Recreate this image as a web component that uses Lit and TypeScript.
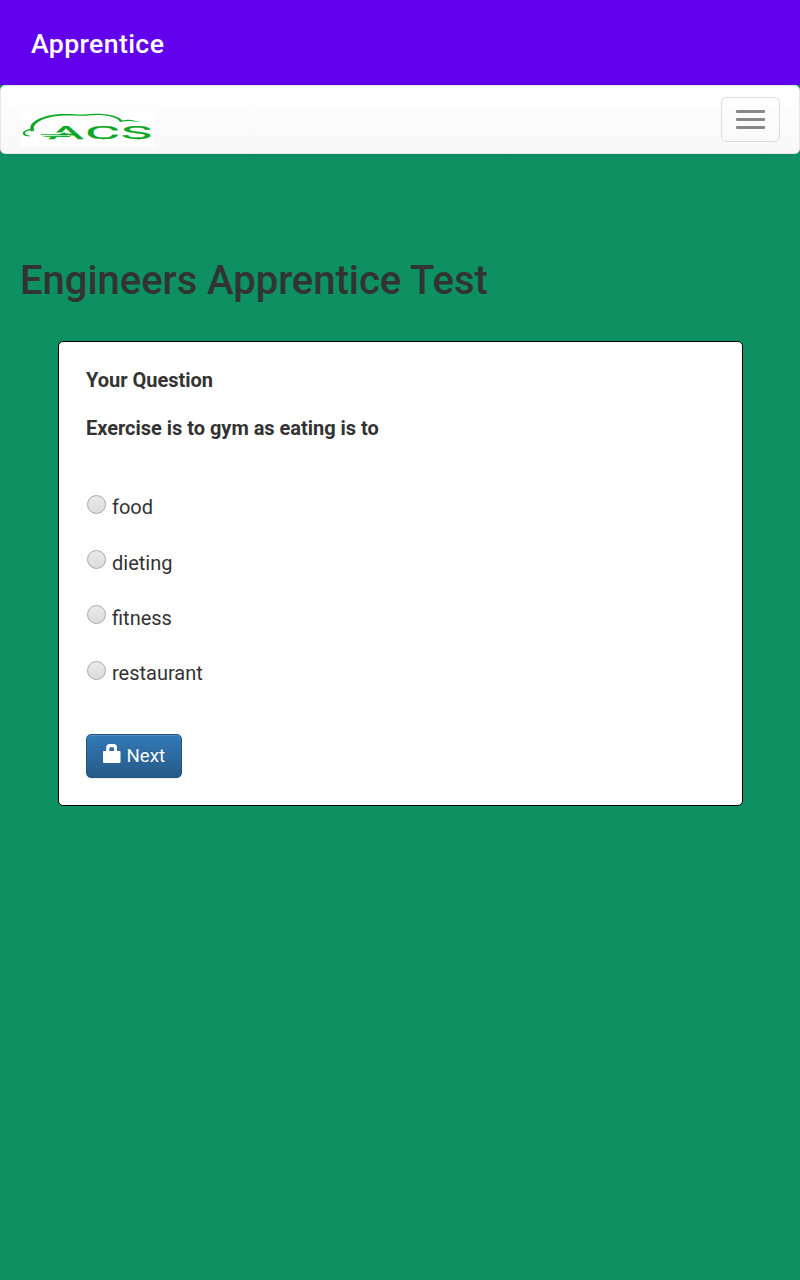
import { LitElement, html, css } from "lit";
import { customElement, state } from "lit/decorators.js";

@customElement("acs-logo")
class AcsLogo extends LitElement {
  static styles = css`
    :host { display: block; width: 133px; height: 41px; }
    svg { display: block; background: #fefefe; }
    text { font: 400 19px Roboto, "Liberation Sans", sans-serif; stroke: #0aa822; stroke-width: .25px; }
  `;
  render() {
    return html`<svg width="133" height="41" viewBox="0 0 133 41" fill="#0aa822" aria-label="ACS">
      <path d="M10.500 25.500C5 17 20 9.500 37 8.200C47 7.500 56 8.800 64 8.500C80 6.500 98 9.500 101 14.500C108 12.500 115 14.500 119 16.500C111 14.500 106 14.500 99 16C96 10 80 8 65 9.700C54 9.700 47 9 37 9.900C20 11.500 10 18.500 13.500 24.500Z"/>
      <path d="M10 23C4 23.500 1 26 2 28C3 30 6 30.500 10 30C6 29.300 4 28.500 4 27C4 25 8 24.500 13 24.500Z"/>
      <g>
        <text x="27" y="33" textLength="36" lengthAdjust="spacingAndGlyphs">A</text>
        <text x="64" y="33" textLength="35" lengthAdjust="spacingAndGlyphs">C</text>
        <text x="100" y="33" textLength="31" lengthAdjust="spacingAndGlyphs">S</text>
      </g>
      <path fill="#fefefe" d="M30 26.500H44L50 31H30Z"/>
      <path d="M20 28.200L38 28.200L43 26.500L49 28.500L46 29.400L20 29ZM21 30.300L48 30L50 31L25 31Z"/>
    </svg>`;
  }
}

@customElement("app-root")
class AppRoot extends LitElement {
  static styles = css`
    :host { display: block; min-height: 1280px; background: #0d9163; color: #333; font: 20px/28px Roboto, sans-serif; }
    * { box-sizing: border-box; }
    .appbar { height: 85px; padding: 2px 31px 0; display: flex; align-items: center; background: #6200ee; color: #fff; font-size: 26.700px; font-weight: 500; letter-spacing: .36px; }
    .navbar { height: 69px; padding: 0 20px; display: flex; align-items: flex-start; justify-content: space-between; border: 1px solid #e7e7e7; border-radius: 5px; background: linear-gradient(#fff, #f8f8f8); box-shadow: 0 1px 5px rgba(0,0,0,.075); }
    acs-logo { margin-top: 20px; }
    .toggle { width: 59px; height: 45px; margin: 11px -1px 0 0; padding: 0; display: flex; flex-direction: column; align-items: center; justify-content: center; gap: 5px; border: 1px solid #ddd; border-radius: 5px; background: transparent; }
    .bar { width: 29px; height: 3px; border-radius: 1px; background: #888; }
    h1 { margin: 102px 20px 0; font-size: 40px; line-height: 50px; font-weight: 500; letter-spacing: -.04px; }
    .card { width: 685px; height: 465px; margin: 35px 0 0 58px; padding: 24px 27px; border: 1px solid #000; border-radius: 5px; background: #fff; }
    .question { margin: 0 0 20px; font-weight: 700; letter-spacing: -.02px; }
    .options { display: grid; grid-template-rows: 56px 55px 55px 55px; margin-top: 51px; }
    .option { display: flex; align-items: flex-start; gap: 6px; }
    .option input { appearance: none; flex: none; width: 19px; height: 19px; margin: 2px 0 0 1px; border: 1px solid #a9a9a9; border-radius: 50%; background: linear-gradient(#e9e9e9, #dcdcdc); }
    .option:nth-child(2) input, .option:nth-child(3) input { margin-top: 1px; }
    .option input:checked { background: radial-gradient(circle, #444 0 4px, #e2e2e2 5px); }
    .next { width: 96px; height: 44px; margin-top: 20px; padding: 0 0 0 16px; display: flex; align-items: center; gap: 6px; border: 1px solid #245580; border-radius: 5px; background: linear-gradient(#337ab7, #265a88); color: #fff; font: 18.660px/26px Roboto, sans-serif; text-shadow: 0 -1px 0 rgba(0,0,0,.2); box-shadow: inset 0 1px 0 rgba(255,255,255,.15), 0 1px 1px rgba(0,0,0,.075); }
    .next svg { margin-top: -5px; }
  `;

  @state() selected = "";

  render() {
    return html`
      <header class="appbar">Apprentice</header>
      <nav class="navbar">
        <acs-logo></acs-logo>
        <button class="toggle" aria-label="Toggle navigation">
          <span class="bar"></span><span class="bar"></span><span class="bar"></span>
        </button>
      </nav>
      <h1>Engineers Apprentice Test</h1>
      <main class="card">
        <p class="question">Your Question</p>
        <p class="question">Exercise is to gym as eating is to</p>
        <div class="options">
          ${["food", "dieting", "fitness", "restaurant"].map(
            (name) => html`<label class="option">
              <input type="radio" name="answer" .checked=${this.selected === name} @change=${() => (this.selected = name)} />
              <span>${name}</span>
            </label>`
          )}
        </div>
        <button class="next">
          <svg width="17.500" height="19" viewBox="0 0 17.500 19" fill="#fff">
            <path fill-rule="evenodd" d="M3.200 7V3.500Q3.200 0 6.700 0H10.500Q14 0 14 3.500V7H16.500Q17.500 7 17.500 8V18Q17.500 19 16.500 19H1Q0 19 0 18V8Q0 7 1 7ZM6.300 7H11V4.500Q11 3.300 9.800 3.300H7.500Q6.300 3.300 6.300 4.500Z"/>
          </svg>
          <span>Next</span>
        </button>
      </main>
    `;
  }
}
